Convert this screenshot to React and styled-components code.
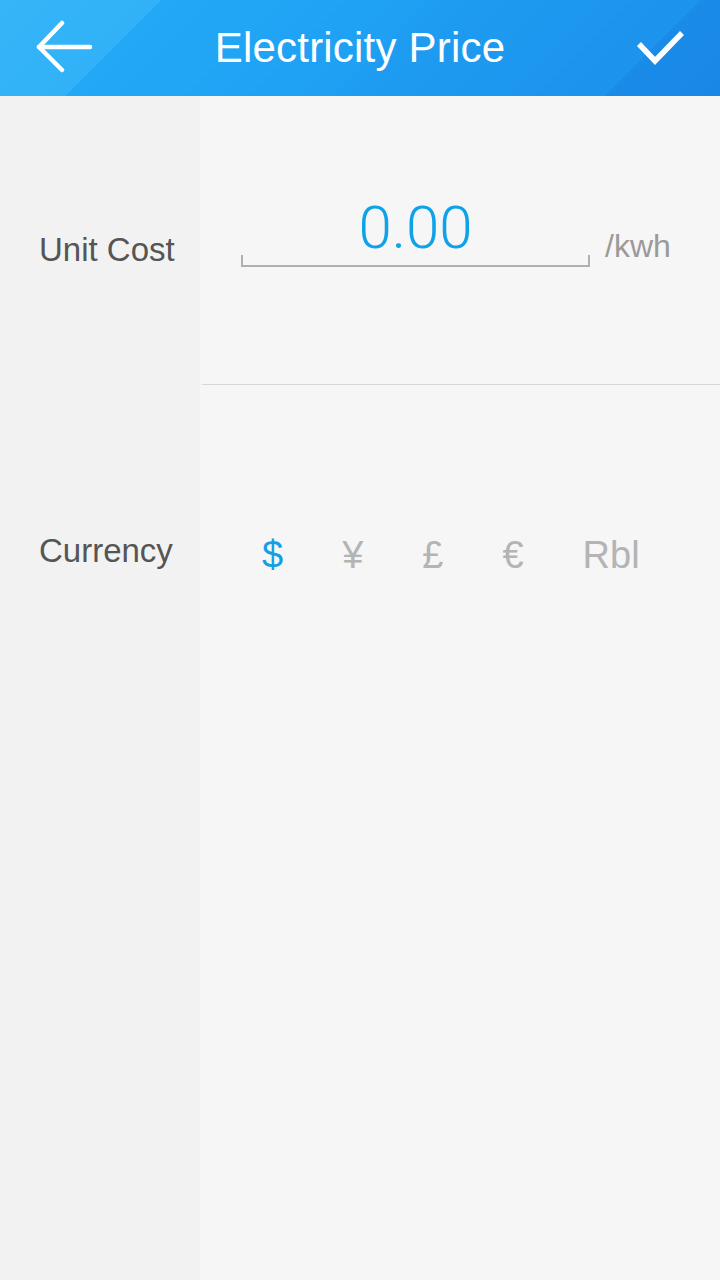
import React from 'react';
import styled, { createGlobalStyle } from 'styled-components';

const GlobalStyle = createGlobalStyle`
    html, body {
        margin: 0;
        padding: 0;
        background: #f5f6f5;
        font-family: "Liberation Sans", Arial, sans-serif;
    }
`

const Screen = styled.div`
    width: 720px;
    min-height: 1280px;
    display: flex;
    flex-direction: column;
    background: linear-gradient(90deg, #f2f2f2 0, #f2f2f2 200px, #f5f6f5 200px);
`

const Header = styled.header`
    height: 96px;
    display: flex;
    align-items: center;
    justify-content: space-between;
    padding: 0 26px;
    box-sizing: border-box;
    background: linear-gradient(135deg,
        #36b5f8 0, #31b1f7 114px,
        #22a8f6 114px, #1fa0f3 303px,
        #1e9df2 303px, #1c93ed 495px,
        #1a8be9 495px, #1a87e7 100%);
`

const IconButton = styled.button`
    width: 76px;
    height: 72px;
    display: flex;
    align-items: center;
    justify-content: ${p => p.$end ? 'flex-end' : 'flex-start'};
    padding: ${p => p.$end ? '0 8px 0 0' : '0'};
    border: none;
    background: none;
    color: #ffffff;
`

const Title = styled.h1`
    margin: 0;
    font-size: 42px;
    font-weight: normal;
    color: #ffffff;
    letter-spacing: 0.2px;
`

const Row = styled.div`
    display: grid;
    grid-template-columns: 200px 1fr;
    height: ${p => p.$height}px;
`

const Label = styled.div`
    display: flex;
    align-items: center;
    padding: ${p => p.$offset || 0}px 0 0 39px;
    font-size: 33px;
    color: #555555;
`

const Field = styled.div`
    display: flex;
    align-items: ${p => p.$bottom ? 'flex-end' : 'center'};
    padding: ${p => p.$pad || '0'};
    margin-left: 2px;
    border-bottom: ${p => p.$divider ? '1px solid #d6d6d6' : 'none'};
`

const InputBox = styled.div`
    width: 349px;
    margin-left: 39px;
    display: flex;
    flex-direction: column;
    align-items: center;
`

const Value = styled.div`
    font-family: Roboto, "Liberation Sans", sans-serif;
    font-weight: 300;
    font-size: 60px;
    line-height: 54px;
    color: #0ea2e9;
`

const Bracket = styled.div`
    align-self: stretch;
    height: 10px;
    border: 2px solid #b0b0b0;
    border-top: none;
`

const Unit = styled.span`
    margin: 0 0 5px 15px;
    font-size: 32px;
    line-height: 32px;
    color: #9a9a9a;
`

const Symbols = styled.div`
    display: flex;
    gap: 59px;
    margin-left: 60px;
    padding-top: 12px;
`

const Symbol = styled.span`
    font-size: 38px;
    color: ${p => p.$active ? '#139fe6' : '#b4b4b4'};
`

const currencies = ['$', '¥', '£', '€', 'Rbl']

const App = () => {
    return (
        <Screen>
            <GlobalStyle />
            <Header>
                <IconButton aria-label="back">
                    <svg width="68" height="56" viewBox="0 0 68 56" fill="none" stroke="#fff" strokeWidth="4.5" strokeLinecap="round" strokeLinejoin="round">
                        <path d="M13 27 H64" />
                        <path d="M36 3 L13 27 L36 50" />
                    </svg>
                </IconButton>
                <Title>Electricity Price</Title>
                <IconButton $end aria-label="save">
                    <svg width="52" height="40" viewBox="0 0 52 40" fill="none" stroke="#fff" strokeWidth="5.5" strokeLinejoin="miter">
                        <path d="M5 16 L21 33 L48 5" />
                    </svg>
                </IconButton>
            </Header>
            <Row $height={289}>
                <Label $offset={18}>Unit Cost</Label>
                <Field $bottom $divider $pad="0 0 117px 0">
                    <InputBox>
                        <Value>0.00</Value>
                        <Bracket />
                    </InputBox>
                    <Unit>/kwh</Unit>
                </Field>
            </Row>
            <Row $height={328}>
                <Label $offset={4}>Currency</Label>
                <Field>
                    <Symbols>
                        {currencies.map((c, i) => (
                            <Symbol key={c} $active={i === 0}>{c}</Symbol>
                        ))}
                    </Symbols>
                </Field>
            </Row>
        </Screen>
    )
}

export default App
